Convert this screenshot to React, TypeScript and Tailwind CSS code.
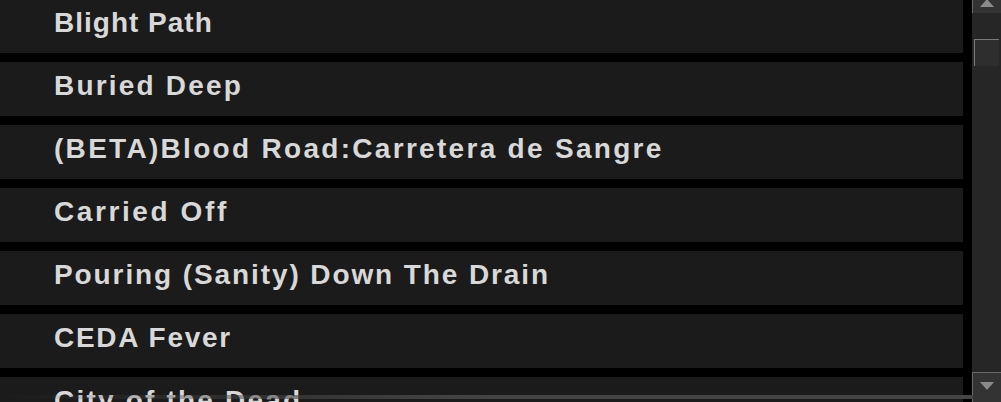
import React from "react";

const items: { label: string; track: string }[] = [
  { label: "Blight Path", track: "tracking-[1px]" },
  { label: "Buried Deep", track: "tracking-[2.2px]" },
  { label: "(BETA)Blood Road:Carretera de Sangre", track: "tracking-[2.3px]" },
  { label: "Carried Off", track: "tracking-[2.6px]" },
  { label: "Pouring (Sanity) Down The Drain", track: "tracking-[1.9px]" },
  { label: "CEDA Fever", track: "tracking-[1.7px]" },
  { label: "City of the Dead", track: "tracking-[2.2px]" },
];

export default function App() {
  return (
    <div className="relative flex h-[402px] w-[1001px] overflow-hidden bg-black">
      <div className="flex w-[963px] flex-col gap-[9px] -mt-px">
        {items.map((it) => (
          <div
            key={it.label}
            className="h-[54px] shrink-0 bg-[#1b1b1b] pl-[54px] pt-[8px]"
          >
            <span
              className={`block text-[28px] leading-[32px] font-bold text-[#d8d8d8] ${it.track}`}
              style={{ fontFamily: '"Liberation Sans", Arial, sans-serif' }}
            >
              {it.label}
            </span>
          </div>
        ))}
      </div>
      <div className="ml-[9px] flex h-full w-[29px] flex-col bg-[#262626]">
        <div className="relative -mt-[17px] h-[30px] w-full shrink-0 border-l border-[#6a6a6a] bg-[#333333]">
          <div className="absolute left-1/2 top-[16px] h-0 w-0 -translate-x-1/2 border-x-[7px] border-b-[8px] border-x-transparent border-b-[#8a8a8a]" />
        </div>
        <div className="ml-[2px] mt-[26px] h-[27px] w-[25px] shrink-0 border-l border-t border-[#7a7a7a] bg-[#2e2e2e]" />
        <div className="flex-1" />
        <div className="relative h-[30px] w-full shrink-0 border-l border-t border-[#6a6a6a] bg-[#333333]">
          <div className="absolute left-1/2 top-[9px] h-0 w-0 -translate-x-1/2 border-x-[7px] border-t-[8px] border-x-transparent border-t-[#8a8a8a]" />
        </div>
      </div>
      <div className="pointer-events-none absolute left-0 top-[395px] h-[4px] w-[973px] bg-gradient-to-r from-transparent via-[#454545] to-[#454545]" />
    </div>
  );
}
